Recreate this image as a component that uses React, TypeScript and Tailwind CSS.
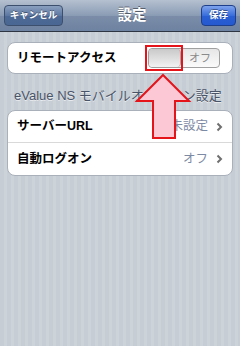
import React from "react"

const jp = "font-['Helvetica','Liberation_Sans','Noto_Sans_CJK_JP',sans-serif]"

const Chevron = () => (
  <svg width="7" height="10" viewBox="0 0 7 10" className="ml-[8px]">
    <path d="M1.5 1.5 L5 5 L1.5 8.5" fill="none" stroke="#6f6f6f" strokeWidth="2" />
  </svg>
)

const Row: React.FC<{ label: string; value: string; last?: boolean }> = ({ label, value, last }) => (
  <div
    className={`flex h-[32px] items-center justify-between pl-[9px] pr-[9px] ${
      last ? "" : "border-b border-[#d9d9d9]"
    }`}
  >
    <span className="text-[12.5px] font-bold text-black">{label}</span>
    <div className="flex items-center">
      <span className="text-[12.5px] text-[#7d8aa3]">{value}</span>
      <Chevron />
    </div>
  </div>
)

const App: React.FC = () => {
  return (
    <div
      className={`relative h-[346px] w-[240px] overflow-hidden bg-[#c6cdd5] bg-[image:repeating-linear-gradient(90deg,#c6cdd5_0px,#c6cdd5_4px,#ccd3d9_4px,#ccd3d9_7px)] ${jp}`}
    >
      {/* Navigation bar */}
      <div className="flex h-[32px] items-center justify-between border-b border-[#2d3642] bg-[linear-gradient(#b5c0d0,#8a9cb4_50%,#7a8ca8_52%,#6e83a1)] px-[4px]">
        <button className="flex h-[21px] w-[59px] items-center justify-center rounded-[4px] border border-[#3c4f6d] bg-[linear-gradient(#8ba0c0,#5d78a2_50%,#4d6a96_52%,#4a6693)] text-[9.5px] font-bold text-white [text-shadow:0_-1px_0_rgba(0,0,0,0.4)]">
          キャンセル
        </button>
        <span className="text-[14.5px] font-bold text-white [text-shadow:0_-1px_0_rgba(0,0,0,0.45)]">設定</span>
        <button className="flex h-[21px] w-[35px] items-center justify-center rounded-[4px] border border-[#1d3f8c] bg-[linear-gradient(#7ea3ec,#3a6edc_50%,#2a5fd4_52%,#2459cf)] text-[9.5px] font-bold text-white [text-shadow:0_-1px_0_rgba(0,0,0,0.4)]">
          保存
        </button>
      </div>

      {/* Remote access */}
      <div className="mx-[7px] mt-[10px] flex h-[32px] items-center justify-between rounded-[8px] border border-[#a9b0b9] bg-white pl-[9px] pr-[12px]">
        <span className="text-[12.5px] font-bold text-black">リモートアクセス</span>
        <div className="flex h-[20px] w-[72px] items-center overflow-hidden rounded-[4px] border border-[#a0a0a0] bg-[linear-gradient(#e6e6e6,#fbfbfb)]">
          <div className="h-full w-[32px] rounded-[4px] border-r border-[#a8a8a8] bg-[linear-gradient(#c9c9c9,#f2f2f2)]" />
          <span className="ml-[8px] text-[11px] text-[#8a8a8a]">オフ</span>
        </div>
      </div>

      {/* Section header */}
      <div className="px-[14px] pt-[14px] pb-[7px] text-[13px] leading-[15px] text-[#4a5468] [text-shadow:0_1px_0_rgba(255,255,255,0.6)]">
        eValue NS モバイルオプション設定
      </div>

      {/* Settings group */}
      <div className="mx-[7px] overflow-hidden rounded-[8px] border border-[#a9b0b9] bg-white">
        <Row label="サーバーURL" value="未設定" />
        <Row label="自動ログオン" value="オフ" last />
      </div>

      {/* Highlight box */}
      <div className="absolute left-[145px] top-[45px] h-[26px] w-[38px] border-2 border-[#e5141b]" />

      {/* Arrow */}
      <svg className="absolute left-0 top-0" width="240" height="346" viewBox="0 0 240 346">
        <path
          d="M163 75 L189 101 L175 101 L175 138 L153 138 L153 101 L137 101 Z"
          fill="#fcc8d6"
          stroke="#e5141b"
          strokeWidth="2"
          strokeLinejoin="miter"
        />
      </svg>
    </div>
  )
}

export default App
